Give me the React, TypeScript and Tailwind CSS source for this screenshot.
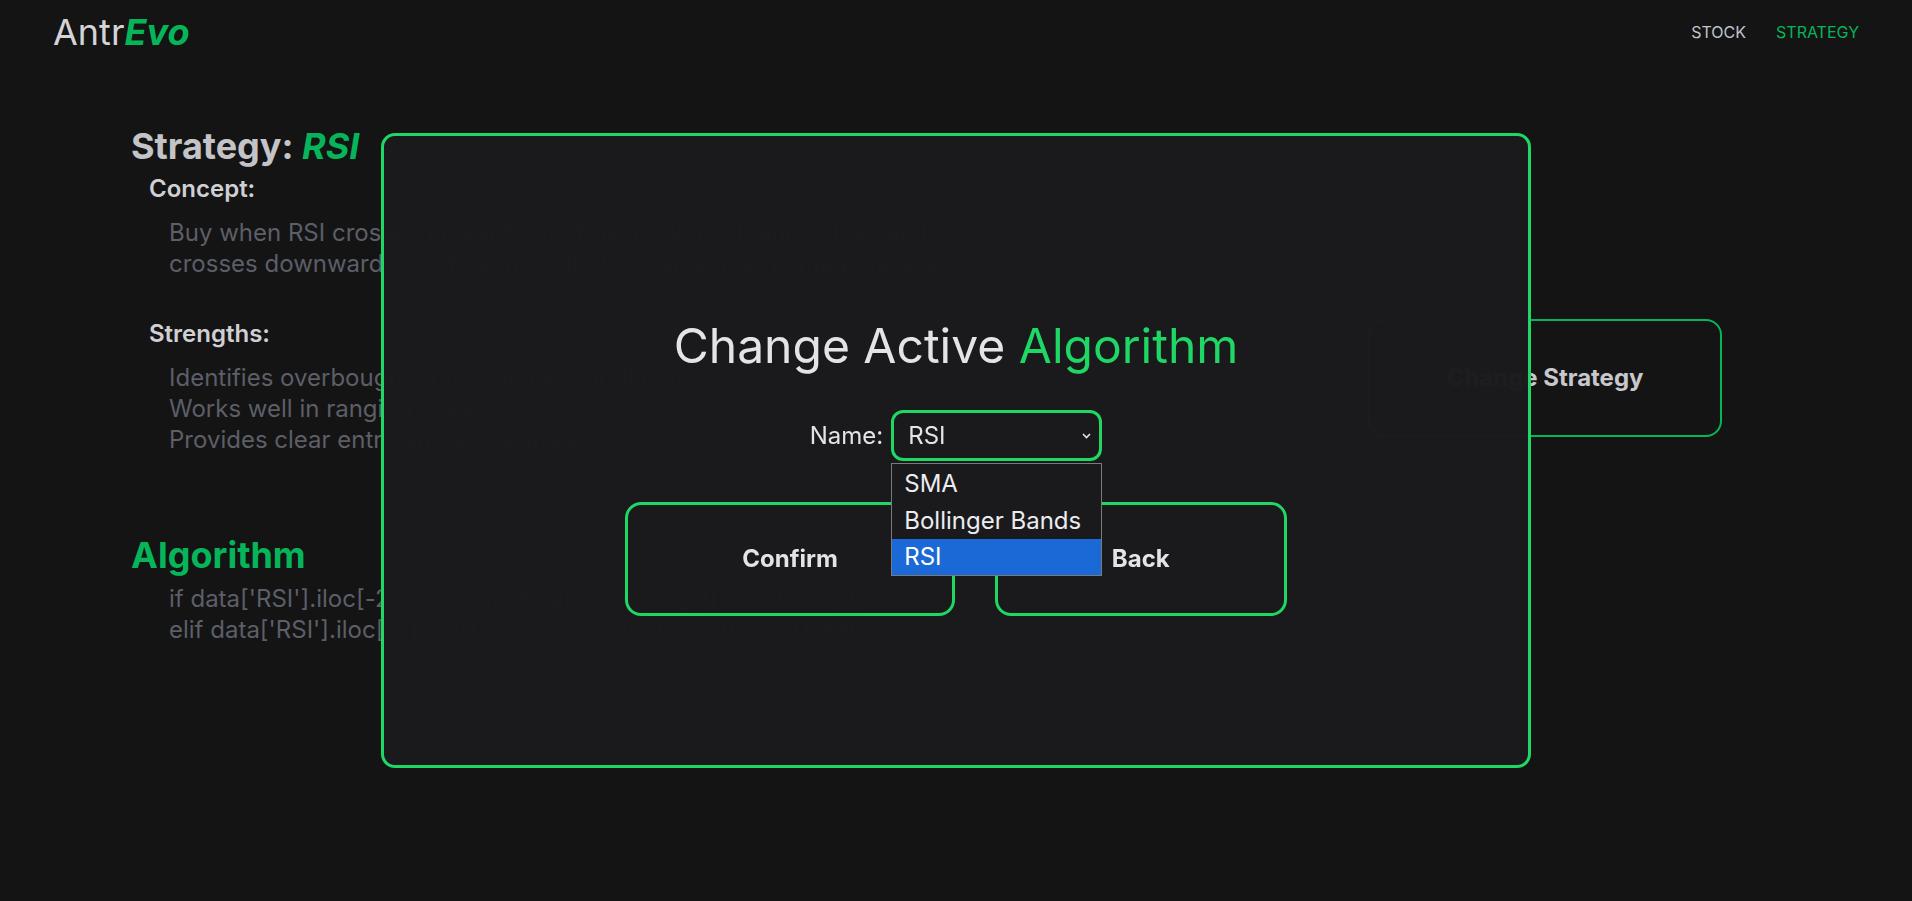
const page = "font-['Inter','Liberation_Sans',sans-serif]";

function Header() {
  return (
    <header className="flex h-[64px] items-center justify-between px-[53px]">
      <div className="text-[36px] leading-none text-[#d4d4d8]">
        Antr<span className="font-bold italic text-[#06b559]">Evo</span>
      </div>
      <nav className="flex gap-[30px] text-[16px] leading-6">
        <a className="text-[#c0c4cc]">STOCK</a>
        <a className="text-[#06b559]">STRATEGY</a>
      </nav>
    </header>
  );
}

function Section({ title, lines }: { title: string; lines: string[] }) {
  return (
    <div className="pl-[18px]">
      <h3 className="text-[24px] font-semibold leading-[32px] text-[#d0d0d4]">{title}</h3>
      <div className="mt-[12px] max-w-[852px] pl-[20px] text-[24px] leading-[31px] text-[#5c5e68]">
        {lines.map((l) => (
          <p key={l}>{l}</p>
        ))}
      </div>
    </div>
  );
}

function StrategyPage() {
  return (
    <main className="flex pt-[62px]">
      <div className="flex-1 pl-[131px]">
        <h1 className="text-[36px] font-bold leading-[40px] text-[#c4c4c8]">
          Strategy: <span className="italic text-[#06b559]">RSI</span>
        </h1>
        <div className="mt-[7px]">
          <Section
            title="Concept:"
            lines={[
              "Buy when RSI crosses upward out of oversold (30), and sell when RSI crosses downward out of overbought (70), anticipating mean reversion.",
            ]}
          />
        </div>
        <div className="mt-[39px]">
          <Section
            title="Strengths:"
            lines={[
              "Identifies overbought and oversold conditions",
              "Works well in ranging markets",
              "Provides clear entry and exit signals",
            ]}
          />
        </div>
        <h2 className="mt-[80px] text-[36px] font-bold leading-[40px] text-[#06b559]">Algorithm</h2>
        <div className="mt-[8px] pl-[38px] text-[24px] leading-[31px] text-[#5c5e68]">
          <p>if data['RSI'].iloc[-2] &lt; 30 and data['RSI'].iloc[-1] &gt;= 30: buy()</p>
          <p>elif data['RSI'].iloc[-2] &gt; 70 and data['RSI'].iloc[-1] &lt;= 70: sell()</p>
        </div>
      </div>
      <button className="mr-[190px] mt-[193px] h-[118px] w-[354px] rounded-[16px] border-2 border-[#06b559] text-[24px] font-bold text-[#c8c8cc]">
        Change Strategy
      </button>
    </main>
  );
}

function Chevron() {
  return (
    <svg width="9" height="6" viewBox="0 0 9 6" fill="none" stroke="#e4e4e7" strokeWidth="1.6">
      <path d="M1 1l3.5 3.5L8 1" />
    </svg>
  );
}

function Modal() {
  const options = ["SMA", "Bollinger Bands", "RSI"];
  return (
    <div className="fixed inset-0 flex items-center justify-center">
      <div className="h-[635px] w-[1150px] rounded-[14px] border-[3px] border-[#1ed765] bg-[#1a1a1d]/[0.985] pt-[186px]">
        <h2 className="text-center text-[48px] leading-none text-[#e4e4e7]">
          Change Active <span className="text-[#1ed765]">Algorithm</span>
        </h2>
        <div className="mt-[40px] flex items-center justify-center gap-[8px]">
          <label className="text-[24px] text-[#e4e4e7]">Name:</label>
          <div className="relative">
            <div className="flex h-[51px] w-[211px] items-center justify-between rounded-[12px] border-[3px] border-[#1ed765] pl-[14px] pr-[8px] text-[24px] text-[#e4e4e7]">
              <span>RSI</span>
              <Chevron />
            </div>
            <ul className="absolute left-0 top-[53px] z-10 w-[211px] border border-[#7a7a7a] bg-[#1a1a1d] pt-[1px] text-[24px] text-[#ececf0]">
              {options.map((o) => (
                <li
                  key={o}
                  className={
                    o === "RSI"
                      ? "h-[36px] bg-[#1b69d6] pl-[12px] leading-[36px] text-white"
                      : "h-[37px] pl-[12px] leading-[37px]"
                  }
                >
                  {o}
                </li>
              ))}
            </ul>
          </div>
        </div>
        <div className="mt-[41px] flex justify-center gap-[40px]">
          <button className="h-[114px] rounded-[16px] border-[3px] border-[#1ed765] px-[114px] text-[24px] font-bold text-[#e4e4e7]">
            Confirm
          </button>
          <button className="h-[114px] rounded-[16px] border-[3px] border-[#1ed765] px-[114px] text-[24px] font-bold text-[#e4e4e7]">
            Back
          </button>
        </div>
      </div>
    </div>
  );
}

export default function App() {
  return (
    <div className={`relative min-h-screen bg-[#141414] ${page}`}>
      <Header />
      <StrategyPage />
      <Modal />
    </div>
  );
}
